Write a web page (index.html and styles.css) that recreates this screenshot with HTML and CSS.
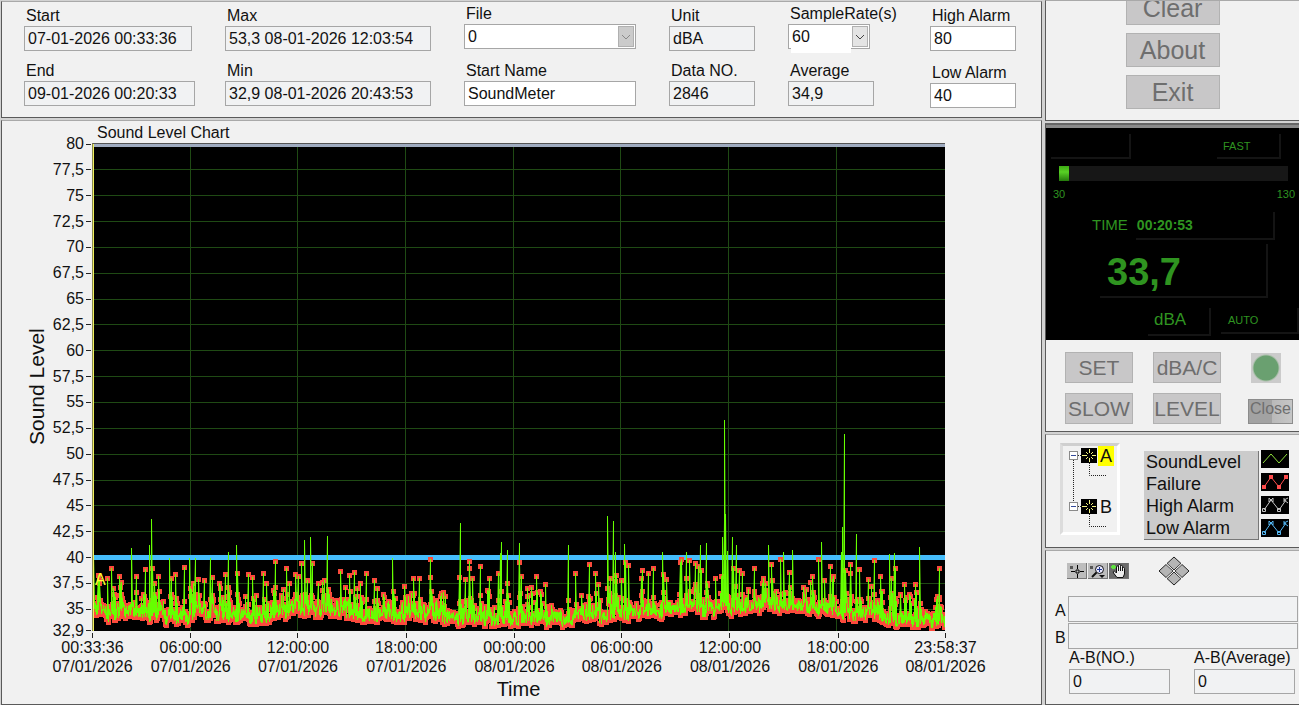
FILE: index.html
```html
<!DOCTYPE html>
<html lang="en">
<head>
    <meta charset="UTF-8">
    <meta name="viewport" content="width=device-width, initial-scale=1.0">
    <title>Sound Level Meter</title>
    <link rel="stylesheet" href="styles.css">
</head>
<body>
    <div class="app">
        <div class="main">
            <section class="panel info">
                <div class="col">
                    <label for="start">Start</label>
                    <input class="field readout w-start" id="start" value="07-01-2026 00:33:36" readonly>
                    <label for="end">End</label>
                    <input class="field readout w-end" id="end" value="09-01-2026 00:20:33" readonly>
                </div>
                <div class="col">
                    <label for="max">Max</label>
                    <input class="field readout w-long" id="max" value="53,3 08-01-2026 12:03:54" readonly>
                    <label for="min">Min</label>
                    <input class="field readout w-long" id="min" value="32,9 08-01-2026 20:43:53" readonly>
                </div>
                <div class="col col-high">
                    <label for="file">File</label>
                    <div class="combo w-file disabled">
                        <select class="field" id="file"><option>0</option></select>
                        <span class="arrow"><svg width="10" height="6" viewBox="0 0 10 6"><path d="M1 1l4 4 4-4"/></svg></span>
                    </div>
                    <label for="name">Start Name</label>
                    <input class="field w-file" id="name" value="SoundMeter">
                </div>
                <div class="col">
                    <label for="unit">Unit</label>
                    <input class="field readout w-short" id="unit" value="dBA" readonly>
                    <label for="datano">Data NO.</label>
                    <input class="field readout w-short" id="datano" value="2846" readonly>
                </div>
                <div class="col col-high">
                    <label for="rate">SampleRate(s)</label>
                    <div class="combo w-rate">
                        <select class="field" id="rate"><option>60</option></select>
                        <span class="arrow"><svg width="10" height="6" viewBox="0 0 10 6"><path d="M1 1l4 4 4-4"/></svg></span>
                    </div>
                    <label for="average">Average</label>
                    <input class="field readout w-short" id="average" value="34,9" readonly>
                </div>
                <div class="col col-low">
                    <label for="high">High Alarm</label>
                    <input class="field w-short" id="high" value="80">
                    <label for="low">Low Alarm</label>
                    <input class="field w-short" id="low" value="40">
                </div>
            </section>

            <section class="panel chart">
                <h2 class="chart-title">Sound Level Chart</h2>
                <div class="y-title"><span>Sound Level</span></div>
                <ul class="y-axis" id="yAxis"></ul>
                <div class="plot">
                    <svg id="plot" viewBox="0 0 852 487" preserveAspectRatio="none"></svg>
                    <span class="cursor-name">A</span>
                </div>
                <ul class="x-axis">
                    <li><span>00:33:36<br>07/01/2026</span></li>
                    <li><span>06:00:00<br>07/01/2026</span></li>
                    <li><span>12:00:00<br>07/01/2026</span></li>
                    <li><span>18:00:00<br>07/01/2026</span></li>
                    <li><span>00:00:00<br>08/01/2026</span></li>
                    <li><span>06:00:00<br>08/01/2026</span></li>
                    <li><span>12:00:00<br>08/01/2026</span></li>
                    <li><span>18:00:00<br>08/01/2026</span></li>
                    <li><span>23:58:37<br>08/01/2026</span></li>
                </ul>
                <div class="x-title">Time</div>
            </section>
        </div>

        <aside class="side">
            <section class="panel actions">
                <button class="btn">Clear</button>
                <button class="btn">About</button>
                <button class="btn">Exit</button>
            </section>

            <section class="panel meter">
                <div class="lcd">
                    <div class="lcd-row">
                        <span class="lcd-box box-blank"></span>
                        <span class="lcd-box box-fast">FAST</span>
                    </div>
                    <div class="bar"><div class="bar-fill"></div></div>
                    <div class="scale"><span>30</span><span>130</span></div>
                    <div class="lcd-row row-time">
                        <span>TIME</span>
                        <span class="lcd-box box-time">00:20:53</span>
                    </div>
                    <div class="lcd-box box-level">33,7</div>
                    <div class="lcd-row row-unit">
                        <span class="lcd-box box-unit">dBA</span>
                        <span class="lcd-box box-auto">AUTO</span>
                    </div>
                </div>
                <div class="keys">
                    <button class="btn key">SET</button>
                    <button class="btn key">dBA/C</button>
                    <button class="led" aria-label="Connection"></button>
                    <button class="btn key">SLOW</button>
                    <button class="btn key">LEVEL</button>
                    <button class="close">Close</button>
                </div>
            </section>

            <section class="panel cursors">
                <div class="tree">
                    <svg class="tree-lines" width="52" height="86" viewBox="0 0 52 86">
                        <g fill="none" stroke="#222" stroke-dasharray="1 1">
                            <path d="M10.500 14V56M15 9.500h4M15 60.500h4M26.500 17V29.500H43M26.500 68V80.500H43"/>
                        </g>
                        <g fill="#fff" stroke="#8a8a8a">
                            <rect x="6.500" y="5.500" width="8" height="8"/>
                            <rect x="6.500" y="56.500" width="8" height="8"/>
                        </g>
                        <path d="M8 9.500h5M8 60.500h5" stroke="#334a9a"/>
                        <path d="M18 2h16v15h-16zM18 53h16v15h-16z" fill="#000"/>
                        <g stroke="#f4f480">
                            <path d="M26.500 3v4M26.500 12v4M19 9.500h5M29 9.500h4M23 6l2 2M28 8l2-2M23 13l2-2M28 11l2 2"/>
                            <path d="M26.500 54v4M26.500 63v4M19 60.500h5M29 60.500h4M23 57l2 2M28 59l2-2M23 64l2-2M28 62l2 2"/>
                        </g>
                    </svg>
                    <div class="tree-names">
                        <span class="selected">A</span>
                        <span>B</span>
                    </div>
                </div>
                <ul class="legend">
                    <li>SoundLevel</li>
                    <li>Failure</li>
                    <li>High Alarm</li>
                    <li>Low Alarm</li>
                </ul>
                <div class="swatches">
                    <svg width="28" height="18" viewBox="0 0 28 18">
                        <path d="M2 13l8-9 8 9 8-9" stroke="#8fe03c" fill="none"/>
                    </svg>
                    <svg width="28" height="18" viewBox="0 0 28 18">
                        <path d="M3 14l7-10 8 10 7-10" stroke="#ff4d4d" fill="none"/>
                        <path d="M1 12h4v4h-4zM8 2h4v4h-4zM16 12h4v4h-4zM23 2h4v4h-4z" fill="#ff4d4d"/>
                    </svg>
                    <svg width="28" height="18" viewBox="0 0 28 18">
                        <path d="M3 14l7-10 8 10 7-10M1.500 12.500h3v3h-3zM8 2l4 4M12 2l-4 4M8 2v4M12 2v4M16.500 12.500h3v3h-3zM23 2v4M27 2l-4 2 4 3" stroke="#c4c4c4" fill="none"/>
                    </svg>
                    <svg width="28" height="18" viewBox="0 0 28 18">
                        <path d="M3 14l7-10 8 10 7-10M1.500 12.500h3v3h-3zM8 2l4 4M12 2l-4 4M8 2v4M12 2v4M16.500 12.500h3v3h-3zM23 2v4M27 2l-4 2 4 3" stroke="#55b8f5" fill="none"/>
                    </svg>
                </div>
            </section>

            <section class="panel compare">
                <div class="tools">
                    <button class="tool" aria-label="Cursor">
                        <svg width="20" height="16" viewBox="0 0 20 16">
                            <path d="M3 3h3v3h-3z" fill="#555"/>
                            <path d="M10.500 2v4M10.500 11v4M4 8.500h4M13 8.500h4M9 7h3v3h-3z" stroke="#000" fill="none"/>
                        </svg>
                    </button>
                    <button class="tool" aria-label="Zoom">
                        <svg width="20" height="16" viewBox="0 0 20 16">
                            <path d="M2 3h3v3h-3z" fill="#555"/>
                            <circle cx="11.500" cy="6.500" r="4" stroke="#111" fill="#e8e8ff"/>
                            <path d="M9 6.500h5M11.500 4v5" stroke="#223a90"/>
                            <path d="M8.500 9.500L4 14" stroke="#111" stroke-width="2"/>
                            <path d="M11 12h6l-3 3z" fill="#111"/>
                        </svg>
                    </button>
                    <button class="tool active" aria-label="Pan">
                        <svg width="20" height="16" viewBox="0 0 20 16">
                            <path d="M8 14.500L4.500 10c-1-2 1-2.500 2-1L7.500 10V4c0-1.500 2-1.500 2 0V2.500c0-1.500 2-1.500 2 0V3.500c0-1.500 2-1.500 2 0V5.500c0-1.500 2-1.500 2 0V11l-1.500 3.500z" fill="#eee" stroke="#111"/>
                            <path d="M9.500 4v4M11.500 3.500v4.500M13.500 5v3" stroke="#111"/>
                            <path d="M3 2h3v4h-3zM2 3h5v2h-5z" fill="#5fe040"/>
                        </svg>
                    </button>
                    <button class="pan" aria-label="Move cursor">
                        <svg width="32" height="30" viewBox="0 0 32 30">
                            <g fill="#b5b5b5" stroke="#222">
                                <path d="M16 1l7 6.500-7 6.500-7-6.500z"/>
                                <path d="M8 8.500l7 6.500-7 6.500L1 15z"/>
                                <path d="M24 8.500l7 6.500-7 6.500-7-6.500z"/>
                                <path d="M16 16l7 6.500-7 6.500-7-6.500z"/>
                            </g>
                            <path d="M8.500 8L23.500 22M23.500 8L8.500 22" stroke="#f4f4f4"/>
                        </svg>
                    </button>
                </div>
                <div class="line">
                    <label for="curA">A</label>
                    <input class="field readout" id="curA" readonly>
                </div>
                <div class="line">
                    <label for="curB">B</label>
                    <input class="field readout" id="curB" readonly>
                </div>
                <div class="diffs">
                    <div class="diff">
                        <label for="diffNo">A-B(NO.)</label>
                        <input class="field readout" id="diffNo" value="0" readonly>
                    </div>
                    <div class="diff">
                        <label for="diffAvg">A-B(Average)</label>
                        <input class="field readout" id="diffAvg" value="0" readonly>
                    </div>
                </div>
            </section>
        </aside>
    </div>
    <script src="script.js"></script>
</body>
</html>
```
FILE: styles.css
```css
* {
    box-sizing: border-box;
}
body {
    margin: 0;
    background-color: #d2d2d2;
    font-family: "Liberation Sans", Arial, sans-serif;
    font-size: 16px;
    line-height: 18px;
    color: #111;
}
ul {
    list-style: none;
    margin: 0;
    padding: 0;
}
button, input, select {
    font-family: inherit;
    margin: 0;
    border-radius: 0;
}
button {
    padding: 0;
    cursor: pointer;
}
.app {
    display: grid;
    grid-template-columns: 1fr 254px;
    gap: 3px;
    min-height: 100vh;
    padding-left: 1px;
}
.main, .side {
    display: flex;
    flex-direction: column;
    gap: 2px;
    min-width: 0;
}
.panel {
    background-color: #f1f1f1;
    border: 1px solid #5a5a5a;
    border-top-color: #a9a9a9;
}
.side .panel {
    border-right: none;
}

/* top readouts */
.info {
    display: grid;
    grid-template-columns: 201fr 239fr 205fr 119fr 142fr 111fr;
    margin-top: 1px;
    padding-left: 22px;
    height: 117px;
}
.col {
    display: grid;
    grid-template-rows: 19px 36px 19px 25px;
    align-content: start;
    padding-top: 5px;
}
.col-high {
    padding-top: 3px;
    grid-template-rows: 19px 38px 19px 25px;
}
.col-low {
    grid-template-rows: 19px 38px 19px 25px;
}
.col label {
    padding-left: 2px;
}
.field {
    height: 25px;
    border: 1px solid #a6a6a6;
    background-color: #fff;
    padding: 0 3px;
    font-size: 16px;
    color: #111;
    outline: none;
}
.readout {
    background-color: #f1f2f3;
}
.w-start { width: 168px; }
.w-end { width: 171px; }
.w-long { width: 206px; }
.w-file { width: 172px; }
.w-short { width: 86px; }
.w-rate { width: 82px; }
.combo {
    position: relative;
    height: 25px;
}
.combo select {
    appearance: none;
    width: 100%;
}
.w-rate::after {
    content: "";
    position: absolute;
    left: 3px;
    bottom: -4px;
    width: 60px;
    height: 6px;
    background-color: #fff;
}
.arrow {
    position: absolute;
    top: 2px;
    right: 2px;
    width: 16px;
    height: 21px;
    display: flex;
    align-items: center;
    justify-content: center;
    background-color: #e4e4e4;
    border: 1px solid #b0b0b0;
    pointer-events: none;
}
.arrow path {
    fill: none;
    stroke: #444;
}
.disabled .arrow {
    background-color: #cbcbcb;
}
.disabled .arrow path {
    stroke: #888;
}

/* chart */
.chart {
    flex: 1;
    display: grid;
    grid-template-columns: 23px 24px 43px 1fr;
    grid-template-rows: 22px 1fr 45px 26px;
    padding-right: 96px;
    padding-bottom: 2px;
}
.chart-title {
    grid-column: 4;
    margin: 0;
    padding: 3px 0 0 5px;
    font-size: 16px;
    font-weight: normal;
    line-height: 18px;
}
.y-title {
    grid-column: 2;
    grid-row: 2;
    writing-mode: vertical-rl;
    transform: rotate(180deg);
    font-size: 21px;
    line-height: 24px;
    text-align: center;
}
.y-axis {
    grid-column: 3;
    grid-row: 2;
    display: grid;
    grid-template-rows: repeat(18, 25fr) 21fr 0;
    padding-top: 1px;
}
.y-axis li {
    display: flex;
    align-items: center;
    justify-content: flex-end;
    gap: 2px;
    height: 0;
    line-height: 0;
}
.y-axis li::after {
    content: "";
    width: 5px;
    height: 1px;
    margin-right: 1px;
    background-color: #222;
}
.plot {
    grid-column: 4;
    grid-row: 2;
    position: relative;
    min-height: 300px;
    background-color: #000;
    border-top: 1px solid #555;
    border-left: 1px solid #8a8a50;
}
.plot svg {
    position: absolute;
    width: 100%;
    height: 100%;
}
.plot path {
    fill: none;
    vector-effect: non-scaling-stroke;
}
.plot .grid { stroke: #1f4a14; }
.plot .high { stroke: #9fabc0; stroke-width: 3; }
.plot .low { stroke: #45bdfb; stroke-width: 5; }
.plot .failure { fill: #fb4a3c; }
.plot .sound { stroke: #66ff00; }
.plot .cursor { stroke: #f0f060; }
.cursor-name {
    position: absolute;
    left: 2px;
    bottom: 42px;
    color: #ffff30;
}
.x-axis {
    grid-column: 4;
    grid-row: 3;
    display: grid;
    grid-template-columns: 98fr 107fr 108fr 108fr 107fr 108fr 108fr 107fr 0;
}
.x-axis li {
    width: 1px;
    display: flex;
    flex-direction: column;
    align-items: center;
    text-align: center;
    line-height: 19px;
    white-space: nowrap;
}
.x-axis li::before {
    content: "";
    width: 1px;
    height: 5px;
    margin-top: 2px;
    flex: none;
    background-color: #222;
}
.x-title {
    grid-column: 4;
    grid-row: 4;
    text-align: center;
    font-size: 20px;
    line-height: 26px;
}

/* right side */
.btn {
    height: 34px;
    border: 1px solid #b2b2b2;
    background-color: #c8c7c8;
    color: #6e6e6e;
    font-size: 25px;
    line-height: 30px;
}
.btn:hover {
    background-color: #d4d4d4;
}
.actions {
    display: flex;
    flex-direction: column;
    align-items: center;
    gap: 8px;
    height: 121px;
    overflow: hidden;
}
.actions .btn {
    flex: none;
    width: 94px;
}
.actions .btn:first-child {
    margin-top: -10px;
}
.meter {
    border-top: 2px solid #666;
    height: 309px;
}
.lcd {
    height: 215px;
    border-top: 3px solid #8a8a8a;
    background-color: #000;
    color: #2f9420;
    font-size: 11px;
    overflow: hidden;
}
.lcd-row {
    display: flex;
    justify-content: space-between;
}
.lcd-box {
    border: solid #141414;
    border-width: 0 2px 2px 0;
}
.box-blank {
    width: 80px;
    margin: 6px 0 0 5px;
    height: 25px;
}
.box-fast {
    width: 64px;
    margin: 6px 18px 0 0;
    padding: 3px 6px;
    height: 25px;
}
.bar {
    height: 15px;
    margin: 7px 11px 0 13px;
    background-color: #171717;
}
.bar-fill {
    width: 10px;
    height: 15px;
    background: linear-gradient(#3dab14, #58d025 40%, #257a0c);
}
.scale {
    display: flex;
    justify-content: space-between;
    padding: 4px 4px 0 7px;
}
.row-time {
    justify-content: flex-start;
    margin: 9px 24px 0 46px;
    font-size: 15px;
    line-height: 26px;
    gap: 8px;
}
.box-time {
    flex: 1;
    height: 28px;
    padding-left: 1px;
    font-size: 14px;
    font-weight: bold;
}
.box-level {
    height: 54px;
    margin: 4px 31px 0 54px;
    padding-left: 7px;
    font-size: 38px;
    line-height: 56px;
    font-weight: bold;
}
.row-unit {
    margin-top: 10px;
    padding-left: 102px;
    justify-content: flex-start;
    gap: 10px;
    line-height: 24px;
}
.box-unit {
    width: 63px;
    height: 28px;
    padding-left: 6px;
    font-size: 17px;
}
.box-auto {
    flex: 1;
    height: 26px;
    padding-left: 7px;
}
.keys {
    display: grid;
    grid-template-columns: 68px 68px 1fr;
    align-items: center;
    justify-items: end;
    gap: 10px 20px;
    padding: 12px 6px 0 19px;
}
.key {
    width: 68px;
    height: 31px;
    font-size: 21px;
    line-height: 26px;
}
.led {
    width: 30px;
    height: 30px;
    margin-right: 12px;
    border: none;
    background: radial-gradient(circle, #6aa070 12px, #a9bfa9 13px, #cbcbcb 14px);
}
.close {
    width: 45px;
    height: 25px;
    margin-top: 5px;
    border: 1px solid #8c8c8c;
    background: linear-gradient(to right, #a2a2a2 23px, #b9b9b9 23px, #c6c6c6);
    color: #6e6e6e;
    font-size: 16px;
    line-height: 18px;
    padding-bottom: 4px;
}
.cursors {
    display: flex;
    align-items: flex-start;
    height: 114px;
    padding: 8px 10px 0 14px;
}
.tree {
    display: flex;
    width: 60px;
    height: 92px;
    border: 3px solid #fff;
    border-top-color: #cfcfcf;
    border-left-color: #dcdcdc;
}
.tree-lines {
    flex: none;
}
.tree-names {
    display: flex;
    flex-direction: column;
    gap: 31px;
    margin-left: -17px;
}
.tree-names span {
    width: 16px;
    height: 20px;
    font-size: 18px;
    line-height: 20px;
    text-align: center;
}
.tree-names .selected {
    background-color: #ffff00;
}
.legend {
    flex: 1;
    margin: 8px 2px 0 24px;
    padding-left: 2px;
    background-color: #cbcbcb;
    border: solid #777;
    border-width: 0 1px 1px 0;
    font-size: 18px;
    line-height: 22px;
}
.swatches {
    display: flex;
    flex-direction: column;
    gap: 5px;
    margin-top: 7px;
}
.swatches svg {
    display: block;
    background-color: #000;
}
.compare {
    flex: 1;
    padding: 5px 0 0 9px;
}
.tools {
    display: flex;
    align-items: center;
    gap: 1px;
    padding-left: 12px;
}
.tool {
    display: flex;
    width: 20px;
    height: 16px;
    border: none;
    background-color: #bdbdbd;
    box-shadow: inset -1px -1px #777;
}
.tool.active {
    background-color: #6b6b6b;
}
.pan {
    display: flex;
    margin-left: 28px;
    border: none;
    background: none;
}
.line {
    display: grid;
    grid-template-columns: 13px 1fr;
    align-items: center;
    margin: 1px 1px 0 0;
}
.line .field {
    min-width: 0;
    height: 26px;
}
.line label {
    padding-top: 4px;
}
.tools + .line {
    margin-top: 10px;
}
.diffs {
    display: flex;
    justify-content: space-between;
    padding: 0 4px 7px 14px;
}
.diff {
    display: flex;
    flex-direction: column;
    gap: 2px;
    width: 101px;
}
.diff label {
    white-space: nowrap;
}
```
FILE: script.js
```js
const TOP = 80;
const BOTTOM = 32.9;
const WIDTH = 852;
const HEIGHT = 487;
const SAMPLES = 2846;

// peaks: [x on the plot, level in dB]
const peaks = [
    [0, 46], [1, 40.3], [5, 38.3], [15, 38], [19, 39], [21, 37.1], [27, 38.2], [28, 37.6], [39, 40.9], [43, 38.2],
    [52, 38.9], [51, 36.5], [57, 41.2], [59, 43.7], [60, 39], [62, 37.5], [66, 38.2], [77, 40], [78, 38], [83, 38.4],
    [91, 39.1], [97, 40], [98, 37.1], [102, 40], [106, 37.9], [111, 37.8], [117, 40], [119, 38.1], [127, 37.5], [132, 38.4],
    [135, 40.5], [136, 37.2], [144, 41.2], [145, 38.5], [155, 38.4], [160, 38.1], [170, 38.5], [174, 37.5], [182, 39.7], [183, 37.2],
    [190, 37], [194, 39], [196, 37.5], [203, 38.4], [205, 38.2], [209, 39.5], [212, 41.7], [214, 37.8], [218, 42], [219, 39.5],
    [225, 37.5], [230, 37.6], [234, 42.1], [248, 38.7], [257, 38.3], [261, 38.6], [264, 37.1], [273, 38.5], [281, 37.8], [284, 37.1],
    [290, 36.5], [300, 40], [301, 36.8], [312, 37.3], [321, 38], [326, 38], [337, 39.9], [338, 38.1], [339, 36.8], [348, 36.3],
    [367, 43.3], [366, 38.1], [372, 37.9], [376, 39.7], [377, 39], [380, 38], [387, 39.2], [396, 38], [395, 36.9], [405, 38.5],
    [408, 41.5], [407, 40.4], [414, 40.7], [415, 37.5], [426, 41.4], [427, 39.6], [428, 38.2], [439, 37.2], [444, 38.2], [448, 36.8],
    [453, 37.4], [475, 41.2], [483, 38.5], [489, 36.4], [496, 39.4], [503, 38.5], [506, 37.4], [515, 44], [517, 38], [520, 43.5],
    [522, 40.5], [524, 38.3], [529, 37.8], [532, 41.3], [533, 39.6], [536, 39.3], [549, 38.8], [548, 38], [555, 38.5], [560, 39],
    [570, 40.5], [571, 38.4], [574, 37.9], [587, 39.6], [589, 39.9], [593, 40.5], [594, 38], [597, 39.8], [602, 39.5], [605, 39.2],
    [607, 41.2], [608, 38.8], [613, 41.4], [614, 37.5], [623, 38], [629, 38.2], [630, 42], [631, 43.5], [632, 53.3], [633, 44.2],
    [634, 40], [635, 40.6], [639, 42], [641, 39], [643, 41.2], [646, 38.8], [649, 38.5], [655, 37], [661, 39], [662, 36.8],
    [671, 38], [669, 37.5], [676, 41.2], [679, 39.4], [680, 37.8], [688, 39.9], [691, 40.5], [692, 36.7], [696, 38.6], [700, 40.7],
    [711, 37.2], [718, 37.6], [720, 38.2], [726, 39.9], [729, 41.5], [732, 37.8], [737, 39.2], [739, 37.9], [740, 38.2], [748, 40.5],
    [750, 43], [751, 52], [753, 38.8], [757, 38.5], [758, 39.4], [763, 42.3], [767, 38.9], [775, 37.9], [781, 39.8], [788, 38.2],
    [789, 36.8], [797, 40.3], [798, 38], [801, 40.4], [802, 39], [812, 37.4], [817, 36.5], [823, 37.4], [827, 41], [846, 39],
    [844, 36]
];

// noise floor over the plot
const floor = [
    [0, 34.2], [15, 33.5], [40, 33.9], [60, 33.3], [95, 33.4], [110, 33.9], [145, 33.4], [168, 33.4], [200, 34.1], [245, 34],
    [280, 33.5], [330, 33.7], [360, 33.2], [400, 33.3], [460, 33.1], [510, 33.6], [560, 33.9], [600, 34.2], [630, 34.1], [700, 34.5],
    [760, 33.7], [780, 33.8], [795, 33.1], [852, 33]
];

let seed = 11;
function random() {
    seed = (seed * 16807) % 2147483647;
    return seed / 2147483647;
}

function toY(level) {
    return (TOP - level) * HEIGHT / (TOP - BOTTOM);
}

function floorAt(x) {
    const i = Math.max(1, floor.findIndex(p => p[0] >= x));
    const [x0, a] = floor[i - 1];
    const [x1, b] = floor[i];
    return a + (b - a) * (x - x0) / (x1 - x0);
}

function readLevels() {
    const levels = [];
    let drift = 0;
    let busy = 0;
    for (let i = 0; i < SAMPLES; i++) {
        const x = i * WIDTH / SAMPLES;
        // the floor wanders a little and noisy spells come and go
        if (i % 9 === 0) {
            drift = random() * 0.7;
            busy = random() < 0.35 ? random() : 0;
        }
        let level = floorAt(x) + drift + random() * (1.1 + busy);
        if (random() < 0.06 + busy * 0.15) {
            level += random() * (1.2 + busy * 1.8);
        }
        levels.push(Math.max(33.1, level));
    }
    peaks.forEach(([x, level]) => {
        const i = Math.min(SAMPLES - 1, Math.round(x * SAMPLES / WIDTH));
        levels[i] = level;
        // sound falls off for a few samples after a peak
        if (i + 4 < SAMPLES) {
            levels[i + 2] = Math.max(levels[i + 2], 35 + random() * 1.8);
            levels[i + 4] = Math.max(levels[i + 4], 34.6 + random() * 1.6);
        }
    });
    return levels;
}

function addPath(name, d) {
    const path = document.createElementNS('http://www.w3.org/2000/svg', 'path');
    path.setAttribute('class', name);
    path.setAttribute('d', d);
    document.getElementById('plot').appendChild(path);
}

function drawAxis() {
    const axis = document.getElementById('yAxis');
    for (let v = 80; v >= 35; v -= 2.5) {
        axis.innerHTML += `<li>${String(v).replace('.', ',')}</li>`;
    }
    axis.innerHTML += '<li>32,9</li>';
}

function drawPlot() {
    let grid = '';
    for (let v = 77.5; v >= 35; v -= 2.5) {
        grid += `M0 ${Math.floor(toY(v)) + 0.5}H${WIDTH}`;
    }
    [98, 205, 313, 421, 528, 636, 744].forEach(x => {
        grid += `M${x - 0.5} 0V${HEIGHT}`;
    });
    addPath('grid', grid);
    addPath('high', `M0 1.5H${WIDTH}`);
    addPath('low', `M0 ${Math.floor(toY(40)) + 0.5}H${WIDTH}`);

    const levels = readLevels();
    let marks = '';
    let line = '';
    levels.forEach((level, i) => {
        const x = Math.floor(i * WIDTH / SAMPLES);
        const y = Math.round(toY(level));
        line += `${i ? 'L' : 'M'}${x + 0.5} ${y}`;
        if (level < 40) {
            marks += `M${x - 2} ${y - 2}h5v5h-5z`;
        }
    });
    addPath('failure', marks);
    addPath('sound', line);
    addPath('cursor', `M0.5 0V${HEIGHT}`);
}

drawAxis();
drawPlot();
```
